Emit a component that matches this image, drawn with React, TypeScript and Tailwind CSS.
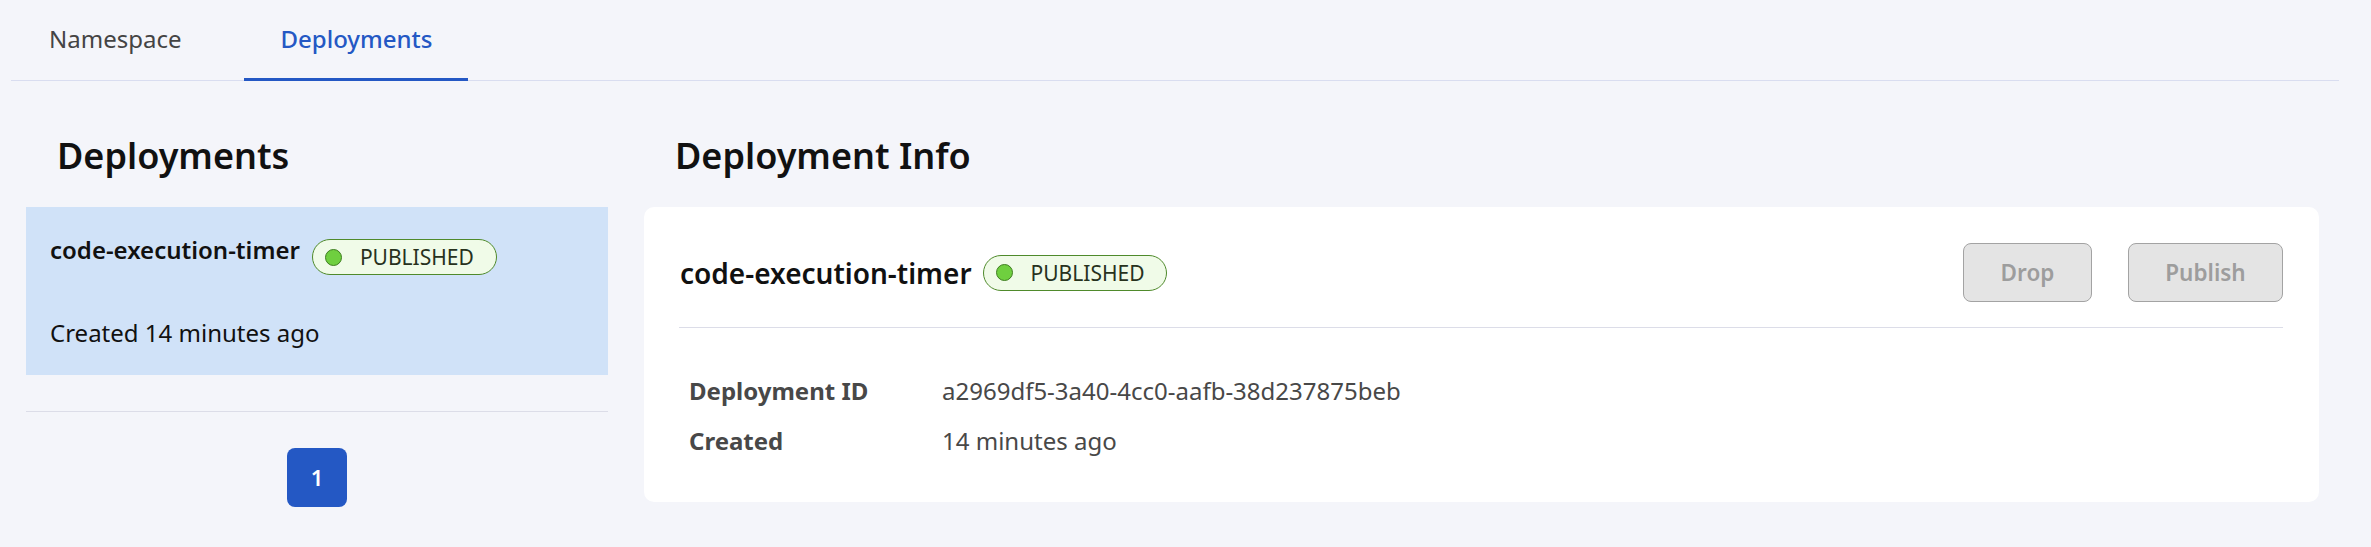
import React from 'react';

const Badge: React.FC = () => (
    <span className="inline-flex items-center h-[36px] pl-[12px] pr-[22px] rounded-full border border-[#4f8a2b] bg-[#f0fbe8]">
        <span className="w-[17px] h-[17px] rounded-full bg-[#6fcf3f] border border-[#3f7d21]" />
        <span className="ml-[18px] text-[21px] leading-[28px] text-[#27321d]">PUBLISHED</span>
    </span>
);

const App: React.FC = () => {
    return (
        <div className="w-full h-[547px] bg-[#f4f5fa] text-[#111] font-['Noto_Sans',sans-serif]">
            {/* Tabs */}
            <div className="ml-[11px] mr-[32px] flex gap-[25px] border-b border-[#d9ddf0]">
                <div className="h-[81px] -mb-px flex items-center px-[38px] border-b-[3px] border-transparent text-[24px] text-[#444]">
                    Namespace
                </div>
                <div className="h-[81px] -mb-px flex items-center px-[36px] border-b-[3px] border-[#2458c4] text-[24px] font-medium text-[#2458c4]">
                    Deployments
                </div>
            </div>

            <div className="flex pl-[26px] pr-[52px] pt-[53px]">
                {/* Left column */}
                <div className="w-[582px] shrink-0">
                    <h2 className="pl-[31px] text-[36px] leading-[44px] font-semibold mb-[29px]">Deployments</h2>
                    <div className="bg-[#d0e2f8] pl-[24px] pt-[27px] pb-[26px]">
                        <div className="flex items-start gap-[12px]">
                            <span className="text-[24px] leading-[32px] font-semibold">code-execution-timer</span>
                            <span className="mt-[5px]">
                                <Badge />
                            </span>
                        </div>
                        <div className="mt-[42px] text-[24px] leading-[32px]">Created 14 minutes ago</div>
                    </div>
                    <div className="mt-[36px] border-t border-[#dcdde8]" />
                    <div className="flex justify-center mt-[36px]">
                        <button className="w-[60px] h-[59px] rounded-[8px] bg-[#2458c4] text-white text-[22px] font-semibold">
                            1
                        </button>
                    </div>
                </div>

                {/* Right column */}
                <div className="flex-1 ml-[36px]">
                    <h2 className="pl-[31px] text-[36px] leading-[44px] font-semibold mb-[29px]">Deployment Info</h2>
                    <div className="bg-white rounded-[10px] pl-[35px] pr-[36px] pt-[36px] pb-[45px]">
                        <div className="flex items-center h-[59px]">
                            <span className="pl-[1px] text-[28px] leading-[36px] font-semibold">code-execution-timer</span>
                            <span className="ml-[11px]">
                                <Badge />
                            </span>
                            <div className="ml-auto flex gap-[36px]">
                                <button className="w-[129px] h-[59px] rounded-[8px] bg-[#e4e4e4] border border-[#a3a3a3] text-[22.5px] font-semibold text-[#9d9d9d]">
                                    Drop
                                </button>
                                <button className="w-[155px] h-[59px] rounded-[8px] bg-[#e4e4e4] border border-[#a3a3a3] text-[22.5px] font-semibold text-[#9d9d9d]">
                                    Publish
                                </button>
                            </div>
                        </div>
                        <div className="mt-[25px] border-t border-[#dcdde8]" />
                        <div className="mt-[47px] pl-[10px] flex flex-col gap-[18px] text-[24px] leading-[32px] text-[#484848]">
                            <div className="flex">
                                <span className="w-[253px] font-bold">Deployment ID</span>
                                <span>a2969df5-3a40-4cc0-aafb-38d237875beb</span>
                            </div>
                            <div className="flex">
                                <span className="w-[253px] font-bold">Created</span>
                                <span>14 minutes ago</span>
                            </div>
                        </div>
                    </div>
                </div>
            </div>
        </div>
    );
};

export default App;
